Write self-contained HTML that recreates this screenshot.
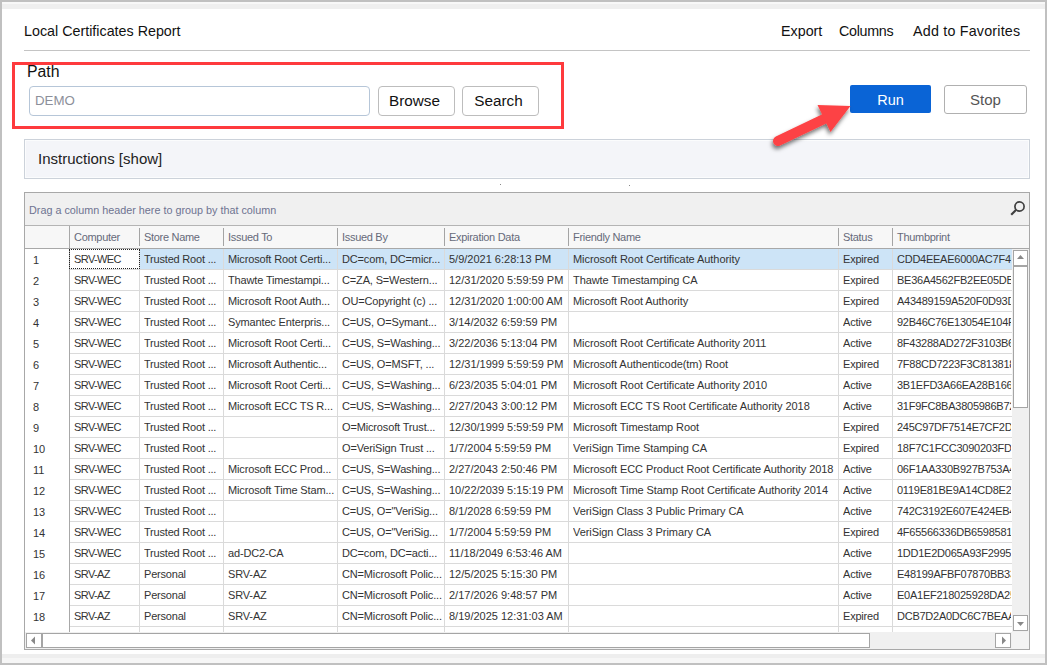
<!DOCTYPE html>
<html><head><meta charset="utf-8">
<style>
html,body{margin:0;padding:0;}
body{width:1047px;height:665px;position:relative;overflow:hidden;background:#fff;font-family:"Liberation Sans",sans-serif;}
div{position:absolute;box-sizing:border-box;}
.fr-t{left:0;top:0;width:1047px;height:2px;background:#c0c0c0;}
.fr-b{left:0;top:663px;width:1047px;height:2px;background:#c0c0c0;}
.fr-l{left:0;top:0;width:2px;height:665px;background:#c0c0c0;}
.fr-r{left:1045px;top:0;width:2px;height:665px;background:#c0c0c0;}
.band-t{left:2px;top:2px;width:1043px;height:7px;background:linear-gradient(#f8f8f8 0,#f8f8f8 2px,#efefef 2px);}
.band-b{left:2px;top:654px;width:1043px;height:9px;background:linear-gradient(#eeeeee 0,#eeeeee 4px,#f6f6f6 4px);}
.title{left:24px;top:21px;font-size:14.3px;line-height:20px;color:#111;white-space:nowrap;}
.menu{top:21px;font-size:14.3px;line-height:20px;color:#111;white-space:nowrap;}
.hr{left:24px;top:50px;width:1006px;height:1px;background:#c4c4c4;}
.redbox{left:12px;top:62px;width:552px;height:67px;border:3px solid #fe3a3d;}
.path{left:27px;top:62px;font-size:15.8px;line-height:20px;color:#111;white-space:nowrap;}
.input{left:29px;top:86px;width:341px;height:30px;border:1px solid #b6c6d8;border-radius:4px;background:#fff;}
.demo{left:35px;top:90.5px;font-size:13.3px;line-height:20px;color:#8c8f9a;white-space:nowrap;}
.btn{top:86px;height:30px;border:1px solid #bdbdbd;border-radius:4px;background:#fff;font-size:15.3px;line-height:28px;color:#111;text-align:center;white-space:nowrap;padding-right:4px;}
.run{left:850px;top:85px;width:81px;height:28px;background:#0a64d6;border-radius:2px;color:#fff;font-size:14.5px;line-height:30px;text-align:center;}
.stop{left:944px;top:85px;width:83px;height:29px;border:1px solid #b0b0b0;border-radius:3px;background:#fff;color:#555;font-size:15px;line-height:27px;text-align:center;}
.instr{left:24px;top:139px;width:1006px;height:40px;border:1px solid #ccd2da;background:#f4f5f9;box-shadow:inset 0 0 0 1px #fbfcfd;}
.instr-t{left:38px;top:149px;font-size:15px;line-height:20px;color:#222;white-space:nowrap;}
.grid{left:24px;top:192px;width:1006px;height:458px;border:1px solid #a8a8a8;background:#fff;}
.grp{left:25px;top:193px;width:1004px;height:33px;background:#f0f0f0;border-bottom:1px solid #b4b4b4;}
.grp-t{left:29px;top:200px;font-size:10.8px;line-height:20px;color:#6e7390;white-space:nowrap;}
.hdr{left:25px;top:226px;width:1004px;height:23px;background:#f7f7f7;border-bottom:1px solid #a8a8a8;}
.ht{top:227px;letter-spacing:-0.3px;font-size:11px;line-height:20px;color:#666a7a;white-space:nowrap;}
.hsep{top:228px;width:1px;height:18px;background:#a4a4a4;}
.sel{left:139px;width:873px;height:20px;background:#cde4f7;}
.rl{left:70px;width:942px;height:1px;background:#dadada;}
.vl{top:249px;width:1px;height:383px;background:#dadada;}
.ind{left:33px;margin-top:1px;font-size:11px;line-height:20px;color:#333;white-space:nowrap;}
.ct{font-size:11px;line-height:20px;color:#333;white-space:nowrap;overflow:hidden;}
.focus{left:69px;top:249px;width:71px;height:20px;border:1px dotted #222;}
.indline{left:69px;top:226px;width:1px;height:406px;background:#a8a8a8;}
.vsb{left:1012px;top:249px;width:17px;height:383px;background:#f0f0f0;}
.vsb-w{left:1012px;top:249px;width:17px;height:2px;background:#fff;}
.sbtn{background:#fff;border:1px solid #a5a5a5;}
.hsb{left:25px;top:632px;width:987px;height:17px;background:#f0f0f0;}
.corner{left:1012px;top:632px;width:17px;height:17px;background:#f3f3f3;}
svg{position:absolute;left:0;top:0;}
</style></head><body>
<div class="fr-t"></div><div class="fr-b"></div><div class="fr-l"></div><div class="fr-r"></div>
<div class="band-t"></div><div class="band-b"></div>

<div class="title">Local Certificates Report</div>
<div class="menu" style="left:781px">Export</div>
<div class="menu" style="left:839px;letter-spacing:-0.3px">Columns</div>
<div class="menu" style="left:913px;letter-spacing:0.2px">Add to Favorites</div>
<div class="hr"></div>

<div class="redbox"></div>
<div class="path">Path</div>
<div class="input"></div>
<div class="demo">DEMO</div>
<div class="btn" style="left:378px;width:77px">Browse</div>
<div class="btn" style="left:462px;width:77px">Search</div>

<div class="run">Run</div>
<div class="stop">Stop</div>

<div class="instr"></div>
<div class="instr-t">Instructions [show]</div>

<div class="grid"></div>
<div style="left:500px;top:184px;width:1px;height:1px;background:#888"></div><div style="left:629px;top:185px;width:1px;height:1px;background:#888"></div>
<div class="grp"></div>
<div class="grp-t">Drag a column header here to group by that column</div>
<svg width="1047" height="665" style="pointer-events:none">
<circle cx="1019.5" cy="206.5" r="4.6" fill="none" stroke="#404040" stroke-width="1.7"/>
<line x1="1016.2" y1="209.8" x2="1011.2" y2="214.8" stroke="#404040" stroke-width="2.2"/>
</svg>
<div class="hdr"></div>
<div class="ht" style="left:74px">Computer</div>
<div class="ht" style="left:144px">Store Name</div>
<div class="ht" style="left:228px">Issued To</div>
<div class="ht" style="left:342px">Issued By</div>
<div class="ht" style="left:449px">Expiration Data</div>
<div class="ht" style="left:573px">Friendly Name</div>
<div class="ht" style="left:843px">Status</div>
<div class="ht" style="left:897px">Thumbprint</div>
<div class="hsep" style="left:139px"></div>
<div class="hsep" style="left:223px"></div>
<div class="hsep" style="left:337px"></div>
<div class="hsep" style="left:444px"></div>
<div class="hsep" style="left:568px"></div>
<div class="hsep" style="left:838px"></div>
<div class="hsep" style="left:892px"></div>
<div class="sel" style="top:249px"></div>
<div class="rl" style="top:269px"></div>
<div class="ind" style="top:249px">1</div>
<div class="ct" style="top:249px;left:74px;width:64px;letter-spacing:-0.6px">SRV-WEC</div>
<div class="ct" style="top:249px;left:144px;width:78px;letter-spacing:-0.2px">Trusted Root ...</div>
<div class="ct" style="top:249px;left:228px;width:108px;letter-spacing:-0.15px">Microsoft Root Certi...</div>
<div class="ct" style="top:249px;left:342px;width:101px;letter-spacing:-0.15px">DC=com, DC=micr...</div>
<div class="ct" style="top:249px;left:449px;width:118px">5/9/2021 6:28:13 PM</div>
<div class="ct" style="top:249px;left:573px;width:264px;letter-spacing:-0.07px">Microsoft Root Certificate Authority</div>
<div class="ct" style="top:249px;left:843px;width:48px;letter-spacing:-0.2px">Expired</div>
<div class="ct" style="top:249px;left:897px;width:114px;letter-spacing:-0.25px">CDD4EEAE6000AC7F40</div>
<div class="rl" style="top:290px"></div>
<div class="ind" style="top:270px">2</div>
<div class="ct" style="top:270px;left:74px;width:64px;letter-spacing:-0.6px">SRV-WEC</div>
<div class="ct" style="top:270px;left:144px;width:78px;letter-spacing:-0.2px">Trusted Root ...</div>
<div class="ct" style="top:270px;left:228px;width:108px;letter-spacing:-0.15px">Thawte Timestampi...</div>
<div class="ct" style="top:270px;left:342px;width:101px;letter-spacing:-0.15px">C=ZA, S=Western...</div>
<div class="ct" style="top:270px;left:449px;width:118px">12/31/2020 5:59:59 PM</div>
<div class="ct" style="top:270px;left:573px;width:264px;letter-spacing:-0.07px">Thawte Timestamping CA</div>
<div class="ct" style="top:270px;left:843px;width:48px;letter-spacing:-0.2px">Expired</div>
<div class="ct" style="top:270px;left:897px;width:114px;letter-spacing:-0.25px">BE36A4562FB2EE05DBB</div>
<div class="rl" style="top:311px"></div>
<div class="ind" style="top:291px">3</div>
<div class="ct" style="top:291px;left:74px;width:64px;letter-spacing:-0.6px">SRV-WEC</div>
<div class="ct" style="top:291px;left:144px;width:78px;letter-spacing:-0.2px">Trusted Root ...</div>
<div class="ct" style="top:291px;left:228px;width:108px;letter-spacing:-0.15px">Microsoft Root Auth...</div>
<div class="ct" style="top:291px;left:342px;width:101px;letter-spacing:-0.15px">OU=Copyright (c) ...</div>
<div class="ct" style="top:291px;left:449px;width:118px">12/31/2020 1:00:00 AM</div>
<div class="ct" style="top:291px;left:573px;width:264px;letter-spacing:-0.07px">Microsoft Root Authority</div>
<div class="ct" style="top:291px;left:843px;width:48px;letter-spacing:-0.2px">Expired</div>
<div class="ct" style="top:291px;left:897px;width:114px;letter-spacing:-0.25px">A43489159A520F0D93D</div>
<div class="rl" style="top:332px"></div>
<div class="ind" style="top:312px">4</div>
<div class="ct" style="top:312px;left:74px;width:64px;letter-spacing:-0.6px">SRV-WEC</div>
<div class="ct" style="top:312px;left:144px;width:78px;letter-spacing:-0.2px">Trusted Root ...</div>
<div class="ct" style="top:312px;left:228px;width:108px;letter-spacing:-0.15px">Symantec Enterpris...</div>
<div class="ct" style="top:312px;left:342px;width:101px;letter-spacing:-0.15px">C=US, O=Symant...</div>
<div class="ct" style="top:312px;left:449px;width:118px">3/14/2032 6:59:59 PM</div>
<div class="ct" style="top:312px;left:843px;width:48px;letter-spacing:-0.2px">Active</div>
<div class="ct" style="top:312px;left:897px;width:114px;letter-spacing:-0.25px">92B46C76E13054E104F</div>
<div class="rl" style="top:353px"></div>
<div class="ind" style="top:333px">5</div>
<div class="ct" style="top:333px;left:74px;width:64px;letter-spacing:-0.6px">SRV-WEC</div>
<div class="ct" style="top:333px;left:144px;width:78px;letter-spacing:-0.2px">Trusted Root ...</div>
<div class="ct" style="top:333px;left:228px;width:108px;letter-spacing:-0.15px">Microsoft Root Certi...</div>
<div class="ct" style="top:333px;left:342px;width:101px;letter-spacing:-0.15px">C=US, S=Washing...</div>
<div class="ct" style="top:333px;left:449px;width:118px">3/22/2036 5:13:04 PM</div>
<div class="ct" style="top:333px;left:573px;width:264px;letter-spacing:-0.07px">Microsoft Root Certificate Authority 2011</div>
<div class="ct" style="top:333px;left:843px;width:48px;letter-spacing:-0.2px">Active</div>
<div class="ct" style="top:333px;left:897px;width:114px;letter-spacing:-0.25px">8F43288AD272F3103B6</div>
<div class="rl" style="top:374px"></div>
<div class="ind" style="top:354px">6</div>
<div class="ct" style="top:354px;left:74px;width:64px;letter-spacing:-0.6px">SRV-WEC</div>
<div class="ct" style="top:354px;left:144px;width:78px;letter-spacing:-0.2px">Trusted Root ...</div>
<div class="ct" style="top:354px;left:228px;width:108px;letter-spacing:-0.15px">Microsoft Authentic...</div>
<div class="ct" style="top:354px;left:342px;width:101px;letter-spacing:-0.15px">C=US, O=MSFT, ...</div>
<div class="ct" style="top:354px;left:449px;width:118px">12/31/1999 5:59:59 PM</div>
<div class="ct" style="top:354px;left:573px;width:264px;letter-spacing:-0.07px">Microsoft Authenticode(tm) Root</div>
<div class="ct" style="top:354px;left:843px;width:48px;letter-spacing:-0.2px">Expired</div>
<div class="ct" style="top:354px;left:897px;width:114px;letter-spacing:-0.25px">7F88CD7223F3C813818</div>
<div class="rl" style="top:395px"></div>
<div class="ind" style="top:375px">7</div>
<div class="ct" style="top:375px;left:74px;width:64px;letter-spacing:-0.6px">SRV-WEC</div>
<div class="ct" style="top:375px;left:144px;width:78px;letter-spacing:-0.2px">Trusted Root ...</div>
<div class="ct" style="top:375px;left:228px;width:108px;letter-spacing:-0.15px">Microsoft Root Certi...</div>
<div class="ct" style="top:375px;left:342px;width:101px;letter-spacing:-0.15px">C=US, S=Washing...</div>
<div class="ct" style="top:375px;left:449px;width:118px">6/23/2035 5:04:01 PM</div>
<div class="ct" style="top:375px;left:573px;width:264px;letter-spacing:-0.07px">Microsoft Root Certificate Authority 2010</div>
<div class="ct" style="top:375px;left:843px;width:48px;letter-spacing:-0.2px">Active</div>
<div class="ct" style="top:375px;left:897px;width:114px;letter-spacing:-0.25px">3B1EFD3A66EA28B1669</div>
<div class="rl" style="top:416px"></div>
<div class="ind" style="top:396px">8</div>
<div class="ct" style="top:396px;left:74px;width:64px;letter-spacing:-0.6px">SRV-WEC</div>
<div class="ct" style="top:396px;left:144px;width:78px;letter-spacing:-0.2px">Trusted Root ...</div>
<div class="ct" style="top:396px;left:228px;width:108px;letter-spacing:-0.15px">Microsoft ECC TS R...</div>
<div class="ct" style="top:396px;left:342px;width:101px;letter-spacing:-0.15px">C=US, S=Washing...</div>
<div class="ct" style="top:396px;left:449px;width:118px">2/27/2043 3:00:12 PM</div>
<div class="ct" style="top:396px;left:573px;width:264px;letter-spacing:-0.07px">Microsoft ECC TS Root Certificate Authority 2018</div>
<div class="ct" style="top:396px;left:843px;width:48px;letter-spacing:-0.2px">Active</div>
<div class="ct" style="top:396px;left:897px;width:114px;letter-spacing:-0.25px">31F9FC8BA3805986B72</div>
<div class="rl" style="top:437px"></div>
<div class="ind" style="top:417px">9</div>
<div class="ct" style="top:417px;left:74px;width:64px;letter-spacing:-0.6px">SRV-WEC</div>
<div class="ct" style="top:417px;left:144px;width:78px;letter-spacing:-0.2px">Trusted Root ...</div>
<div class="ct" style="top:417px;left:342px;width:101px;letter-spacing:-0.15px">O=Microsoft Trust...</div>
<div class="ct" style="top:417px;left:449px;width:118px">12/30/1999 5:59:59 PM</div>
<div class="ct" style="top:417px;left:573px;width:264px;letter-spacing:-0.07px">Microsoft Timestamp Root</div>
<div class="ct" style="top:417px;left:843px;width:48px;letter-spacing:-0.2px">Expired</div>
<div class="ct" style="top:417px;left:897px;width:114px;letter-spacing:-0.25px">245C97DF7514E7CF2DF</div>
<div class="rl" style="top:458px"></div>
<div class="ind" style="top:438px">10</div>
<div class="ct" style="top:438px;left:74px;width:64px;letter-spacing:-0.6px">SRV-WEC</div>
<div class="ct" style="top:438px;left:144px;width:78px;letter-spacing:-0.2px">Trusted Root ...</div>
<div class="ct" style="top:438px;left:342px;width:101px;letter-spacing:-0.15px">O=VeriSign Trust ...</div>
<div class="ct" style="top:438px;left:449px;width:118px">1/7/2004 5:59:59 PM</div>
<div class="ct" style="top:438px;left:573px;width:264px;letter-spacing:-0.07px">VeriSign Time Stamping CA</div>
<div class="ct" style="top:438px;left:843px;width:48px;letter-spacing:-0.2px">Expired</div>
<div class="ct" style="top:438px;left:897px;width:114px;letter-spacing:-0.25px">18F7C1FCC3090203FD5</div>
<div class="rl" style="top:479px"></div>
<div class="ind" style="top:459px">11</div>
<div class="ct" style="top:459px;left:74px;width:64px;letter-spacing:-0.6px">SRV-WEC</div>
<div class="ct" style="top:459px;left:144px;width:78px;letter-spacing:-0.2px">Trusted Root ...</div>
<div class="ct" style="top:459px;left:228px;width:108px;letter-spacing:-0.15px">Microsoft ECC Prod...</div>
<div class="ct" style="top:459px;left:342px;width:101px;letter-spacing:-0.15px">C=US, S=Washing...</div>
<div class="ct" style="top:459px;left:449px;width:118px">2/27/2043 2:50:46 PM</div>
<div class="ct" style="top:459px;left:573px;width:264px;letter-spacing:-0.07px">Microsoft ECC Product Root Certificate Authority 2018</div>
<div class="ct" style="top:459px;left:843px;width:48px;letter-spacing:-0.2px">Active</div>
<div class="ct" style="top:459px;left:897px;width:114px;letter-spacing:-0.25px">06F1AA330B927B753A4</div>
<div class="rl" style="top:500px"></div>
<div class="ind" style="top:480px">12</div>
<div class="ct" style="top:480px;left:74px;width:64px;letter-spacing:-0.6px">SRV-WEC</div>
<div class="ct" style="top:480px;left:144px;width:78px;letter-spacing:-0.2px">Trusted Root ...</div>
<div class="ct" style="top:480px;left:228px;width:108px;letter-spacing:-0.15px">Microsoft Time Stam...</div>
<div class="ct" style="top:480px;left:342px;width:101px;letter-spacing:-0.15px">C=US, S=Washing...</div>
<div class="ct" style="top:480px;left:449px;width:118px">10/22/2039 5:15:19 PM</div>
<div class="ct" style="top:480px;left:573px;width:264px;letter-spacing:-0.07px">Microsoft Time Stamp Root Certificate Authority 2014</div>
<div class="ct" style="top:480px;left:843px;width:48px;letter-spacing:-0.2px">Active</div>
<div class="ct" style="top:480px;left:897px;width:114px;letter-spacing:-0.25px">0119E81BE9A14CD8E22</div>
<div class="rl" style="top:521px"></div>
<div class="ind" style="top:501px">13</div>
<div class="ct" style="top:501px;left:74px;width:64px;letter-spacing:-0.6px">SRV-WEC</div>
<div class="ct" style="top:501px;left:144px;width:78px;letter-spacing:-0.2px">Trusted Root ...</div>
<div class="ct" style="top:501px;left:342px;width:101px;letter-spacing:-0.15px">C=US, O=&quot;VeriSig...</div>
<div class="ct" style="top:501px;left:449px;width:118px">8/1/2028 6:59:59 PM</div>
<div class="ct" style="top:501px;left:573px;width:264px;letter-spacing:-0.07px">VeriSign Class 3 Public Primary CA</div>
<div class="ct" style="top:501px;left:843px;width:48px;letter-spacing:-0.2px">Active</div>
<div class="ct" style="top:501px;left:897px;width:114px;letter-spacing:-0.25px">742C3192E607E424EB4</div>
<div class="rl" style="top:542px"></div>
<div class="ind" style="top:522px">14</div>
<div class="ct" style="top:522px;left:74px;width:64px;letter-spacing:-0.6px">SRV-WEC</div>
<div class="ct" style="top:522px;left:144px;width:78px;letter-spacing:-0.2px">Trusted Root ...</div>
<div class="ct" style="top:522px;left:342px;width:101px;letter-spacing:-0.15px">C=US, O=&quot;VeriSig...</div>
<div class="ct" style="top:522px;left:449px;width:118px">1/7/2004 5:59:59 PM</div>
<div class="ct" style="top:522px;left:573px;width:264px;letter-spacing:-0.07px">VeriSign Class 3 Primary CA</div>
<div class="ct" style="top:522px;left:843px;width:48px;letter-spacing:-0.2px">Expired</div>
<div class="ct" style="top:522px;left:897px;width:114px;letter-spacing:-0.25px">4F65566336DB6598581</div>
<div class="rl" style="top:563px"></div>
<div class="ind" style="top:543px">15</div>
<div class="ct" style="top:543px;left:74px;width:64px;letter-spacing:-0.6px">SRV-WEC</div>
<div class="ct" style="top:543px;left:144px;width:78px;letter-spacing:-0.2px">Trusted Root ...</div>
<div class="ct" style="top:543px;left:228px;width:108px;letter-spacing:-0.15px">ad-DC2-CA</div>
<div class="ct" style="top:543px;left:342px;width:101px;letter-spacing:-0.15px">DC=com, DC=acti...</div>
<div class="ct" style="top:543px;left:449px;width:118px">11/18/2049 6:53:46 AM</div>
<div class="ct" style="top:543px;left:843px;width:48px;letter-spacing:-0.2px">Active</div>
<div class="ct" style="top:543px;left:897px;width:114px;letter-spacing:-0.25px">1DD1E2D065A93F29955</div>
<div class="rl" style="top:584px"></div>
<div class="ind" style="top:564px">16</div>
<div class="ct" style="top:564px;left:74px;width:64px;letter-spacing:-0.6px">SRV-AZ</div>
<div class="ct" style="top:564px;left:144px;width:78px;letter-spacing:-0.2px">Personal</div>
<div class="ct" style="top:564px;left:228px;width:108px;letter-spacing:-0.15px">SRV-AZ</div>
<div class="ct" style="top:564px;left:342px;width:101px;letter-spacing:-0.15px">CN=Microsoft Polic...</div>
<div class="ct" style="top:564px;left:449px;width:118px">12/5/2025 5:15:30 PM</div>
<div class="ct" style="top:564px;left:843px;width:48px;letter-spacing:-0.2px">Active</div>
<div class="ct" style="top:564px;left:897px;width:114px;letter-spacing:-0.25px">E48199AFBF07870BB33</div>
<div class="rl" style="top:605px"></div>
<div class="ind" style="top:585px">17</div>
<div class="ct" style="top:585px;left:74px;width:64px;letter-spacing:-0.6px">SRV-AZ</div>
<div class="ct" style="top:585px;left:144px;width:78px;letter-spacing:-0.2px">Personal</div>
<div class="ct" style="top:585px;left:228px;width:108px;letter-spacing:-0.15px">SRV-AZ</div>
<div class="ct" style="top:585px;left:342px;width:101px;letter-spacing:-0.15px">CN=Microsoft Polic...</div>
<div class="ct" style="top:585px;left:449px;width:118px">2/17/2026 9:48:57 PM</div>
<div class="ct" style="top:585px;left:843px;width:48px;letter-spacing:-0.2px">Active</div>
<div class="ct" style="top:585px;left:897px;width:114px;letter-spacing:-0.25px">E0A1EF218025928DA25</div>
<div class="rl" style="top:626px"></div>
<div class="ind" style="top:606px">18</div>
<div class="ct" style="top:606px;left:74px;width:64px;letter-spacing:-0.6px">SRV-AZ</div>
<div class="ct" style="top:606px;left:144px;width:78px;letter-spacing:-0.2px">Personal</div>
<div class="ct" style="top:606px;left:228px;width:108px;letter-spacing:-0.15px">SRV-AZ</div>
<div class="ct" style="top:606px;left:342px;width:101px;letter-spacing:-0.15px">CN=Microsoft Polic...</div>
<div class="ct" style="top:606px;left:449px;width:118px">8/19/2025 12:31:03 AM</div>
<div class="ct" style="top:606px;left:843px;width:48px;letter-spacing:-0.2px">Expired</div>
<div class="ct" style="top:606px;left:897px;width:114px;letter-spacing:-0.25px">DCB7D2A0DC6C7BEAAD</div>
<div class="vl" style="left:139px"></div>
<div class="vl" style="left:223px"></div>
<div class="vl" style="left:337px"></div>
<div class="vl" style="left:444px"></div>
<div class="vl" style="left:568px"></div>
<div class="vl" style="left:838px"></div>
<div class="vl" style="left:892px"></div>
<div class="indline"></div>
<div class="focus"></div>

<div class="vsb"></div>
<div class="sbtn" style="left:1013px;top:250px;width:15px;height:16px"></div>
<div class="sbtn" style="left:1013px;top:266px;width:15px;height:142px"></div>
<div class="sbtn" style="left:1013px;top:615px;width:15px;height:16px"></div>
<div class="hsb"></div>
<div class="sbtn" style="left:26px;top:633px;width:16px;height:15px"></div>
<div class="sbtn" style="left:42px;top:633px;width:828px;height:15px"></div>
<div class="sbtn" style="left:995px;top:633px;width:16px;height:15px"></div>
<div class="corner"></div>
<svg width="1047" height="665">
<polygon points="1017,259 1024,259 1020.5,255" fill="#888"/>
<polygon points="1017,622 1024,622 1020.5,626" fill="#888"/>
<polygon points="31,640.5 35,636.5 35,644.5" fill="#888"/>
<polygon points="1002,636.5 1006,640.5 1002,644.5" fill="#888"/>
</svg>

<svg width="1047" height="665">
<defs><filter id="sh" x="-20%" y="-20%" width="140%" height="160%"><feDropShadow dx="-1" dy="3" stdDeviation="2" flood-color="#000" flood-opacity="0.55"/></filter></defs>
<g filter="url(#sh)">
<line x1="778" y1="141" x2="824" y2="119" stroke="#fd4244" stroke-width="10" stroke-linecap="round"/>
<polygon points="850.5,106 817.5,105 830.5,132" fill="#fd4244"/>
</g>
</svg>
</body></html>
